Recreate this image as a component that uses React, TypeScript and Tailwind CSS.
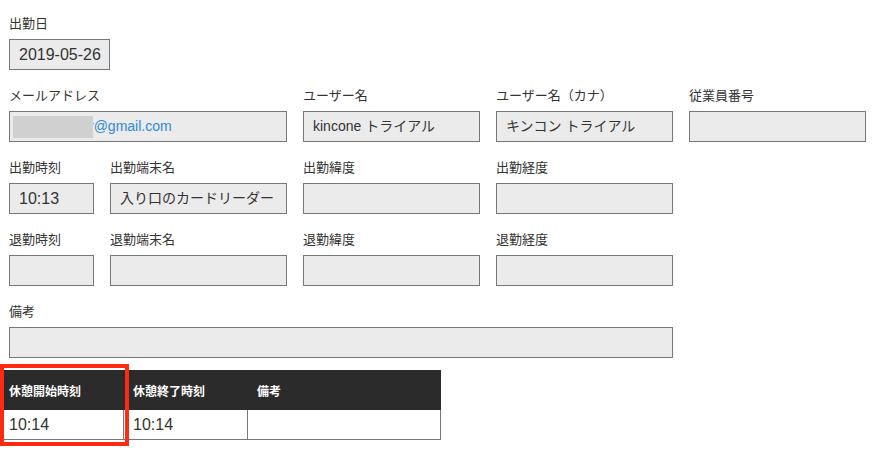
import type { ReactNode } from "react";

type FieldProps = {
  label: string;
  width: string;
  children?: ReactNode;
  numeric?: boolean;
};

function Field({ label, width, children, numeric }: FieldProps) {
  return (
    <div className="flex flex-col gap-[6px]">
      <span className="h-[18px] text-[13px] leading-[18px] text-[#333]">{label}</span>
      <div
        className={`${width} flex h-[31px] items-center overflow-hidden border border-[#777] bg-[#ebebeb] pl-[9px] text-[#333] ${
          numeric ? "text-[16px]" : "text-[14px]"
        }`}
      >
        {children}
      </div>
    </div>
  );
}

export default function App() {
  return (
    <div className="relative min-h-[457px] bg-white pt-[15px] font-['Liberation_Sans','Noto_Sans_CJK_JP',sans-serif] text-[#333]">
      <div className="flex flex-col gap-[17px] pl-[9px]">
        {/* 出勤日 */}
        <Field label="出勤日" width="w-[101px]" numeric>
          2019-05-26
        </Field>

        {/* user row */}
        <div className="flex gap-[16px]">
          <div className="flex flex-col gap-[6px]">
            <span className="h-[18px] text-[13px] leading-[18px]">メールアドレス</span>
            <div className="flex h-[31px] w-[278px] items-center overflow-hidden border border-[#777] bg-[#ebebeb] pl-[3px] text-[14px]">
              <span className="relative z-10 h-[22px] w-[80px] shrink-0 bg-[#d0d0d0]" />
              <span className="-ml-[4px] text-[#2f8ad8]">r@gmail.com</span>
            </div>
          </div>
          <Field label="ユーザー名" width="w-[177px]">
            kincone トライアル
          </Field>
          <Field label="ユーザー名（カナ）" width="w-[177px]">
            キンコン トライアル
          </Field>
          <Field label="従業員番号" width="w-[177px]" />
        </div>

        {/* 出勤 */}
        <div className="flex gap-[16px]">
          <Field label="出勤時刻" width="w-[85px]" numeric>
            10:13
          </Field>
          <Field label="出勤端末名" width="w-[177px]">
            入り口のカードリーダー
          </Field>
          <Field label="出勤緯度" width="w-[177px]" />
          <Field label="出勤経度" width="w-[177px]" />
        </div>

        {/* 退勤 */}
        <div className="flex gap-[16px]">
          <Field label="退勤時刻" width="w-[85px]" />
          <Field label="退勤端末名" width="w-[177px]" />
          <Field label="退勤緯度" width="w-[177px]" />
          <Field label="退勤経度" width="w-[177px]" />
        </div>

        <Field label="備考" width="w-[664px]" />
      </div>

      {/* breaks table */}
      <div className="mt-[12px] w-[441px]">
        <div className="grid h-[40px] grid-cols-[124px_124px_193px] items-center bg-[#2b2b2b] pt-[4px] text-[12px] font-bold text-white">
          <span className="pl-[9px]">休憩開始時刻</span>
          <span className="pl-[9px]">休憩終了時刻</span>
          <span className="pl-[9px]">備考</span>
        </div>
        <div className="grid h-[30px] grid-cols-[124px_124px_193px] border-b border-[#777] text-[16px]">
          <span className="flex items-center border-r border-[#777] pl-[9px]">10:14</span>
          <span className="flex items-center border-r border-[#777] pl-[9px]">10:14</span>
          <span className="border-r border-[#777]" />
        </div>
      </div>

      {/* highlight */}
      <div className="pointer-events-none absolute left-0 top-[364px] h-[82px] w-[129px] border-4 border-[#ff2a12]" />
    </div>
  );
}
